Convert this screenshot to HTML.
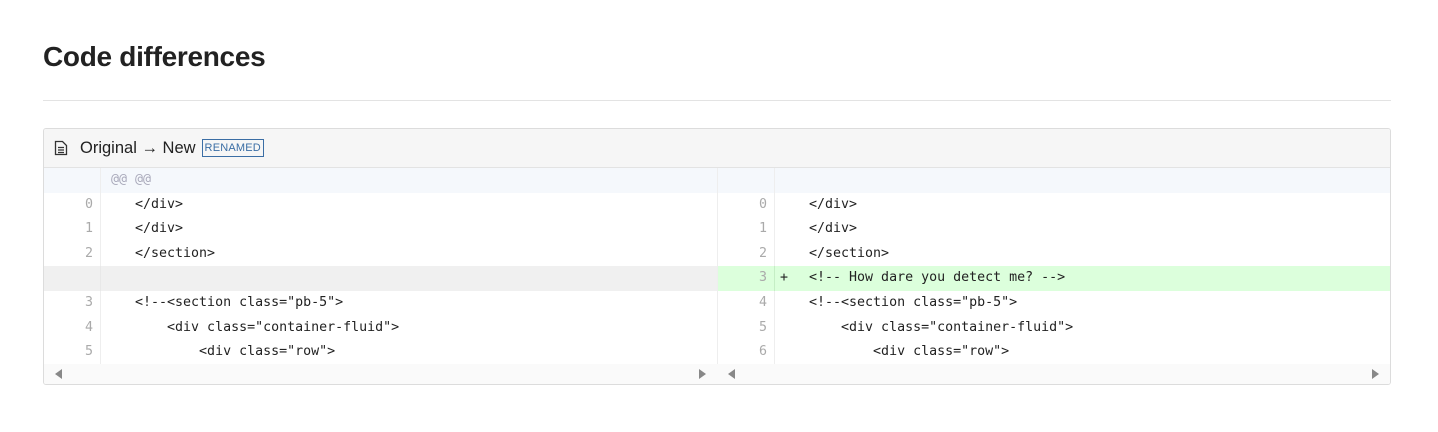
<!DOCTYPE html>
<html><head><style>
body{margin:0;background:#fff;font-family:"Liberation Sans",sans-serif;width:1438px;height:432px;overflow:hidden;position:relative}
h1{position:absolute;left:43px;top:41px;margin:0;font-size:28px;font-weight:bold;color:#222;letter-spacing:-0.3px}
.hr{position:absolute;left:43px;top:100px;width:1348px;height:1px;background:#e3e3e3}
.card{position:absolute;left:43px;top:128px;width:1346px;height:255px;border:1px solid #dcdcdc;border-radius:3px;overflow:hidden}
.hd{height:38px;background:#f6f6f6;border-bottom:1px solid #e3e3e3;display:flex;align-items:center;font-size:16.5px;color:#222}
.badge{border:1px solid #3b6ea5;color:#3b6ea5;font-size:11px;padding:2px 2px;margin-left:6px;letter-spacing:.2px}
.pane{position:absolute;top:39px;width:673px}
.r{height:24.6px;display:flex;font-family:"DejaVu Sans Mono",monospace;font-size:13.3px;line-height:24.6px;color:#222;white-space:pre}
.ln{width:57px;flex:none;box-sizing:border-box;text-align:right;padding-right:7px;color:#aaa;border-right:1px solid #eee}
.mk{width:18px;flex:none;text-align:center}
.hunk{background:#f5f8fc;color:#aab}
.add{background:#dcffdc}
.add .ln{border-right-color:#c5eec5}
.empty{background:#f0f0f0}
.sb{position:absolute;top:235px;height:20px;width:673px;background:#fafafa}
.tri{position:absolute;top:5px;width:0;height:0;border-top:5px solid transparent;border-bottom:5px solid transparent}
</style></head><body>
<h1>Code differences</h1>
<div class="hr"></div>
<div class="card">
<div class="hd"><svg width="14" height="16" style="margin:0 12px 0 10px" viewBox="0 0 14 16"><path d="M1.5 1.5h7l4 4v9h-11z" fill="none" stroke="#333" stroke-width="1.3"/><path d="M4 7.5h6M4 10h6M4 12.5h6" stroke="#333" stroke-width="1.2"/></svg>Original → New<span class="badge">RENAMED</span></div>
<div class="pane" style="left:0">
<div class="r hunk"><span class="ln"></span><span style="padding-left:10px">@@ @@</span></div>
<div class="r"><span class="ln">0</span><span class="mk"> </span><span>  &lt;/div&gt;</span></div>
<div class="r"><span class="ln">1</span><span class="mk"> </span><span>  &lt;/div&gt;</span></div>
<div class="r"><span class="ln">2</span><span class="mk"> </span><span>  &lt;/section&gt;</span></div>
<div class="r empty"><span class="ln" style="border-right-color:#e8e8e8"></span></div>
<div class="r"><span class="ln">3</span><span class="mk"> </span><span>  &lt;!--&lt;section class="pb-5"&gt;</span></div>
<div class="r"><span class="ln">4</span><span class="mk"> </span><span>      &lt;div class="container-fluid"&gt;</span></div>
<div class="r"><span class="ln">5</span><span class="mk"> </span><span>          &lt;div class="row"&gt;</span></div>
</div>
<div class="pane" style="left:673px;border-left:1px solid #eee">
<div class="r hunk"><span class="ln"></span></div>
<div class="r"><span class="ln">0</span><span class="mk"> </span><span>  &lt;/div&gt;</span></div>
<div class="r"><span class="ln">1</span><span class="mk"> </span><span>  &lt;/div&gt;</span></div>
<div class="r"><span class="ln">2</span><span class="mk"> </span><span>  &lt;/section&gt;</span></div>
<div class="r add"><span class="ln">3</span><span class="mk">+</span><span>  &lt;!-- How dare you detect me? --&gt;</span></div>
<div class="r"><span class="ln">4</span><span class="mk"> </span><span>  &lt;!--&lt;section class="pb-5"&gt;</span></div>
<div class="r"><span class="ln">5</span><span class="mk"> </span><span>      &lt;div class="container-fluid"&gt;</span></div>
<div class="r"><span class="ln">6</span><span class="mk"> </span><span>          &lt;div class="row"&gt;</span></div>
</div>
<div class="sb" style="left:0"><div class="tri" style="left:11px;border-right:7px solid #888"></div><div class="tri" style="left:655px;border-left:7px solid #888"></div></div>
<div class="sb" style="left:673px"><div class="tri" style="left:11px;border-right:7px solid #888"></div><div class="tri" style="left:655px;border-left:7px solid #888"></div></div>
</div>
</body></html>
